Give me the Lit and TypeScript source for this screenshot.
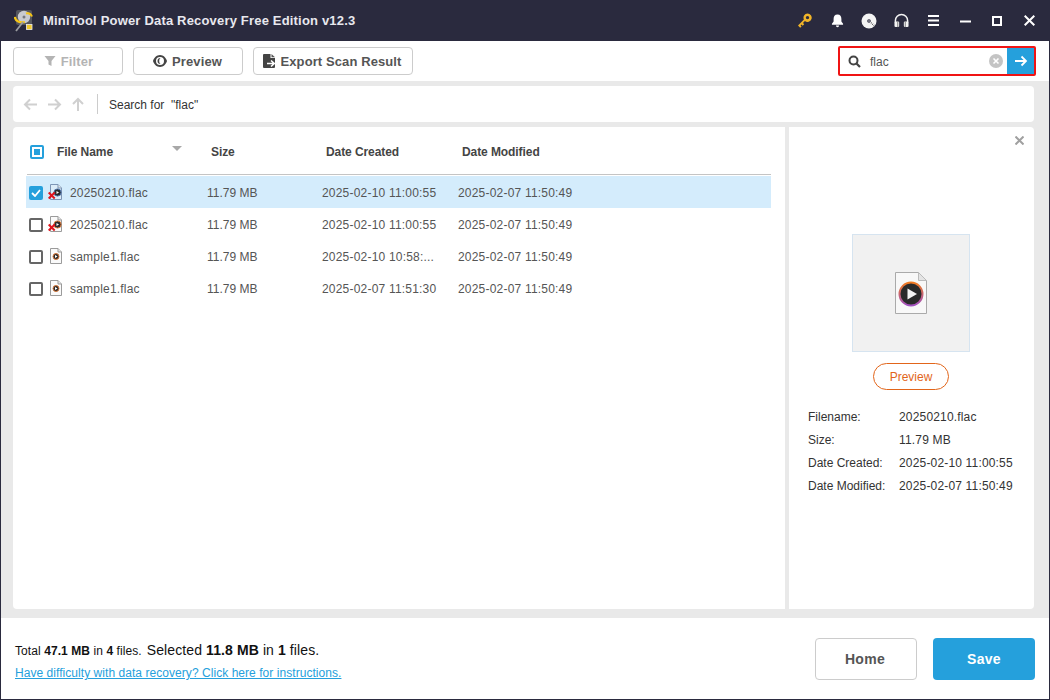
import {LitElement, css, html, svg} from 'lit';
import {customElement} from 'lit/decorators.js';

const ROWS = [
  {name: '20250210.flac', size: '11.79 MB', created: '2025-02-10 11:00:55', modified: '2025-02-07 11:50:49', deleted: true, selected: true},
  {name: '20250210.flac', size: '11.79 MB', created: '2025-02-10 11:00:55', modified: '2025-02-07 11:50:49', deleted: true, selected: false},
  {name: 'sample1.flac', size: '11.79 MB', created: '2025-02-10 10:58:...', modified: '2025-02-07 11:50:49', deleted: false, selected: false},
  {name: 'sample1.flac', size: '11.79 MB', created: '2025-02-07 11:51:30', modified: '2025-02-07 11:50:49', deleted: false, selected: false},
];

const DETAILS = [
  ['Filename:', '20250210.flac'],
  ['Size:', '11.79 MB'],
  ['Date Created:', '2025-02-10 11:00:55'],
  ['Date Modified:', '2025-02-07 11:50:49'],
];

const logo = svg`<svg class="logo" width="20" height="23" viewBox="0 0 20 23">
  <rect x="2" y="1" width="16" height="15" rx="2" fill="#55575e"/>
  <circle cx="10" cy="8" r="6.200" fill="#c9cbcf"/>
  <circle cx="10" cy="8" r="1.500" fill="#77797e"/>
  <path d="M.8 8c.7 4.500 5 6 10 5" stroke="#f5c518" stroke-width="2.200" fill="none"/>
  <path d="M12 4.500c3-1 5 .5 6 3" stroke="#f5c518" stroke-width="2" fill="none"/>
  <path d="M9 13l-7 9" stroke="#9a9ca0" stroke-width="1.800"/>
  <rect x="12.500" y="15.500" width="5.500" height="5" fill="#f0c92c" stroke="#eee" stroke-width=".8"/>
</svg>`;

function fileIcon(deleted: boolean, selected: boolean) {
  const line = selected ? '#7d95b5' : '#9b9b9b';
  const cx = deleted ? 9.5 : 8;
  const r = deleted ? 3.6 : 3;
  return svg`<svg class="file-icon" width="15" height="16" viewBox="0 0 15 16">
    <path d="M2.500.5h7.500l3.500 3.500v11.500h-11z" fill="${selected ? '#dcecf8' : '#fafafa'}" stroke="${line}"/>
    <path d="M10 .5v3.500h3.500" fill="#e6e6e6" stroke="${line}"/>
    <circle cx="${cx}" cy="8.500" r="${r}" fill="#2a2a2a" stroke="${selected ? '#4f74a8' : '#d9783a'}" stroke-width="1"/>
    <path d="M${cx - 1} 7l2.500 1.500L${cx - 1} 10z" fill="#fff"/>
    ${deleted
      ? svg`<path d="M.7 8.500l6 6M6.700 8.500l-6 6" stroke="#e0141c" stroke-width="2"/>`
      : ''}
  </svg>`;
}

@customElement('app-root')
export class AppRoot extends LitElement {
  static styles = css`
    :host {
      display: block;
      width: 1050px;
      height: 700px;
      font-family: 'Liberation Sans', Arial, sans-serif;
      font-size: 12px;
      color: #555;
    }
    .window {
      box-sizing: border-box;
      height: 700px;
      display: flex;
      flex-direction: column;
      border: 1px solid #2a2a3e;
      border-width: 0 1px 1px 1px;
      background: #e9e9e9;
    }
    .titlebar {
      height: 41px;
      flex: none;
      background: #2a2a3e;
      display: flex;
      align-items: center;
      padding-left: 14px;
      margin: 0 -1px;
      color: #e8e8ee;
    }
    .titlebar .logo {
      display: block;
      margin-top: -1px;
    }
    .titlebar .title {
      margin-left: 9px;
      font-size: 13px;
      font-weight: 700;
      letter-spacing: 0.18px;
    }
    .win-icons {
      margin-left: auto;
      display: grid;
      grid-template-columns: repeat(8, 32px);
      justify-items: center;
      align-items: center;
      padding-right: 5px;
    }
    .win-icons svg {
      display: block;
    }
    .toolbar {
      height: 40px;
      flex: none;
      background: #fff;
      display: flex;
      align-items: center;
      padding: 0 13px 0 12px;
    }
    .tool-btn {
      box-sizing: border-box;
      height: 28px;
      width: 110px;
      margin-right: 10px;
      border: 1px solid #ccc;
      border-radius: 4px;
      display: flex;
      align-items: center;
      justify-content: center;
      gap: 5px;
      font-size: 13px;
      font-weight: 700;
      color: #555;
      letter-spacing: 0.1px;
    }
    .tool-btn.disabled {
      color: #b4b4b4;
      padding-left: 1px;
    }
    .tool-btn.wide {
      width: 160px;
      padding-right: 2px;
    }
    .tool-btn.eye {
      padding-right: 1px;
    }
    .search {
      box-sizing: border-box;
      margin-left: auto;
      width: 198px;
      height: 30px;
      border: 2px solid #f01414;
      border-radius: 2px;
      display: flex;
      align-items: center;
      padding-left: 8px;
      color: #555;
    }
    .search .query {
      margin-left: 9px;
      padding-top: 1px;
      flex: 1;
    }
    .search .go {
      width: 27px;
      height: 26px;
      background: #25a0dc;
      display: flex;
      align-items: center;
      justify-content: center;
      margin-left: 4px;
    }
    .content {
      flex: 1;
      min-height: 0;
      padding: 5px 15px 9px 12px;
      display: flex;
      flex-direction: column;
      gap: 5px;
    }
    .address {
      height: 36px;
      flex: none;
      background: #fff;
      border-radius: 4px;
      display: flex;
      align-items: center;
      padding-left: 10px;
      color: #333;
    }
    .address .arrows {
      display: flex;
      gap: 9px;
      align-items: center;
    }
    .address .sep {
      width: 1px;
      height: 20px;
      background: #ccc;
      margin: 0 10px 0 12px;
    }
    .address .path {
      padding: 1px 0 0 1px;
    }
    .main {
      flex: 1;
      min-height: 0;
      display: flex;
      gap: 4px;
    }
    .list {
      width: 772px;
      flex: none;
      background: #fff;
      border-radius: 4px 0 0 4px;
      padding: 0 14px 0 13px;
      box-sizing: border-box;
    }
    .head {
      box-sizing: border-box;
      height: 48px;
      padding-top: 2px;
      border-bottom: 1px solid #c4c4c4;
      margin-left: 1px;
      display: grid;
      grid-template-columns: 30px 154px 115px 136px 1fr;
      align-items: center;
      font-weight: 700;
      color: #444;
      letter-spacing: -0.08px;
      position: relative;
    }
    .head .tri {
      position: absolute;
      left: 145px;
      top: 19px;
      width: 0;
      height: 0;
      border: 5.5px solid transparent;
      border-top: 5px solid #a8a8a8;
      border-bottom: 0;
    }
    .all {
      box-sizing: border-box;
      width: 14px;
      height: 14px;
      margin-left: 3px;
      border: 2px solid #25a0dc;
      border-radius: 2px;
      padding: 2px;
    }
    .all i {
      display: block;
      width: 6px;
      height: 6px;
      background: #25a0dc;
    }
    .rows {
      padding-top: 1px;
    }
    .row {
      box-sizing: border-box;
      height: 32px;
      display: grid;
      grid-template-columns: 19px 22px 137px 115px 136px 1fr;
      align-items: center;
      padding: 2px 0 0 3px;
      letter-spacing: 0.2px;
      color: #555;
    }
    .row .size {
      letter-spacing: 0;
    }
    .row.selected {
      background: #d4ecfc;
    }
    .check {
      box-sizing: border-box;
      width: 14px;
      height: 14px;
      border: 2px solid #666;
      border-radius: 2px;
    }
    .check.on {
      border: none;
      background: #25a0dc;
      display: flex;
      align-items: center;
      justify-content: center;
    }
    .file-icon {
      display: block;
      margin-top: -2px;
    }
    .preview {
      flex: 1;
      background: #fff;
      border-radius: 0 4px 4px 0;
      position: relative;
      display: flex;
      flex-direction: column;
      align-items: center;
      padding: 107px 1px 0 0;
    }
    .preview .close {
      position: absolute;
      right: 10px;
      top: 9px;
    }
    .thumb {
      box-sizing: border-box;
      width: 118px;
      height: 118px;
      background: #f1f1f1;
      border: 1px solid #d6e4f0;
      display: flex;
      align-items: center;
      justify-content: center;
    }
    .pill {
      box-sizing: border-box;
      margin-top: 11px;
      width: 76px;
      height: 27px;
      border: 1px solid #e2651a;
      border-radius: 14px;
      display: flex;
      align-items: center;
      justify-content: center;
      color: #e2651a;
    }
    .details {
      align-self: stretch;
      margin-top: 15px;
      padding-left: 19px;
      display: grid;
      grid-template-columns: 91px 1fr;
      grid-auto-rows: 23px;
      align-items: center;
      color: #333;
    }
    .details .value {
      letter-spacing: 0.17px;
    }
    .footer {
      height: 81px;
      flex: none;
      background: #fff;
      display: flex;
      align-items: center;
      padding: 0 14px;
    }
    .info {
      color: #111;
      padding-top: 5px;
    }
    .info .counts {
      display: flex;
      align-items: baseline;
      gap: 5px;
      letter-spacing: 0.08px;
    }
    .info .selected {
      font-size: 14px;
      letter-spacing: 0.1px;
    }
    .info a {
      display: block;
      margin-top: 8px;
      color: #25a0dc;
      text-decoration: underline;
      letter-spacing: 0.05px;
    }
    .actions {
      margin-left: auto;
      display: flex;
      gap: 16px;
    }
    .actions div {
      box-sizing: border-box;
      width: 102px;
      height: 42px;
      border-radius: 4px;
      display: flex;
      align-items: center;
      justify-content: center;
      font-size: 14px;
      font-weight: 700;
      letter-spacing: 0.3px;
    }
    .home {
      border: 1px solid #ccc;
      color: #555;
      padding-right: 2px;
    }
    .save {
      background: #25a0dc;
      color: #fff;
    }
  `;

  renderWinIcons() {
    return html`<div class="win-icons">
      <svg width="14" height="15" viewBox="0 0 14 15">
        <path fill-rule="evenodd" d="M9.500.5a4.200 4.200 0 1 1-2.600 7.500L5 10l1.200 1.200-1.500 1.500-1.200-1.200-.9.900 1 1-1.400 1.400L0 12.600 5.900 6.500A4.200 4.200 0 0 1 9.500.5zm0 2.400a1.700 1.700 0 1 0 0 3.400 1.700 1.700 0 0 0 0-3.400z" fill="#f0b429"/>
      </svg>
      <svg width="13" height="15" viewBox="0 0 14 15">
        <path d="M7 1c3 0 4.200 2.200 4.200 5v2.500L13 11v1H1v-1l1.800-2.500V6C2.800 3.200 4 1 7 1z" fill="#fff"/>
        <path d="M5.300 13h3.400a1.700 1.700 0 0 1-3.400 0z" fill="#fff"/>
      </svg>
      <svg width="16" height="16" viewBox="0 0 16 16">
        <circle cx="8" cy="8" r="7.500" fill="#f4f4f4"/>
        <circle cx="8" cy="8" r="1.800" fill="#2a2a3e"/>
        <circle cx="8" cy="8" r=".7" fill="#f4f4f4"/>
        <path d="M9.800 10.500l1.200-1M11 11.800l1.200-1M12.200 13.100l1.200-1" stroke="#555" stroke-width="1"/>
      </svg>
      <svg width="15" height="15" viewBox="0 0 16 16">
        <path d="M1.500 10V8a6.500 6.500 0 0 1 13 0v2" fill="none" stroke="#f4f4f4" stroke-width="1.600"/>
        <rect x="0.500" y="9" width="5" height="6" rx="1.200" fill="#f4f4f4"/>
        <rect x="10.500" y="9" width="5" height="6" rx="1.200" fill="#f4f4f4"/>
        <path d="M4 9v6M12 9v6" stroke="#777" stroke-width="1"/>
      </svg>
      <svg width="11" height="11" viewBox="0 0 11 11">
        <path d="M0 1h11M0 5.500h11M0 10h11" stroke="#fff" stroke-width="2"/>
      </svg>
      <svg width="11" height="11" viewBox="0 0 11 11">
        <path d="M0 6.500h11" stroke="#fff" stroke-width="2"/>
      </svg>
      <svg width="10" height="10" viewBox="0 0 10 10">
        <rect x="1" y="1" width="8" height="8" fill="none" stroke="#fff" stroke-width="2"/>
      </svg>
      <svg width="11" height="11" viewBox="0 0 11 11">
        <path d="M.7.700l9.600 9.600M10.300.700L.7 10.300" stroke="#fff" stroke-width="2"/>
      </svg>
    </div>`;
  }

  renderToolbar() {
    return html`<div class="toolbar">
      <div class="tool-btn disabled">
        <svg width="12" height="12" viewBox="0 0 12 12"><path d="M.5 1h11L7.500 6v5l-3-1.500V6z" fill="#b4b4b4"/></svg>
        Filter
      </div>
      <div class="tool-btn eye">
        <svg width="14" height="12" viewBox="0 0 14 12">
          <path fill-rule="evenodd" d="M7 0c3.500 0 6 2.800 7 6-1 3.200-3.500 6-7 6S1 9.200 0 6c1-3.200 3.500-6 7-6zm0 2a4 4 0 1 0 0 8 4 4 0 0 0 0-8z" fill="#444"/>
          <path d="M7.500 3a3 3 0 0 0 0 6 4 4 0 0 1 0-6z" fill="#444"/>
        </svg>
        Preview
      </div>
      <div class="tool-btn wide">
        <svg width="13" height="14" viewBox="0 0 13 14">
          <path d="M1 0h6.500v4H12v9a1 1 0 0 1-1 1H1a1 1 0 0 1-1-1V1a1 1 0 0 1 1-1z" fill="#444"/>
          <path d="M8.500 0L12 3.300H8.500z" fill="#555"/>
          <path d="M4 9.500h7M8 6.500l3.300 3L8 12.500" stroke="#fff" stroke-width="1.600" fill="none"/>
        </svg>
        Export Scan Result
      </div>
      <div class="search">
        <svg width="13" height="13" viewBox="0 0 13 13">
          <circle cx="5.500" cy="5.500" r="4" fill="none" stroke="#444" stroke-width="2"/>
          <path d="M8.500 8.500l3.500 3.500" stroke="#444" stroke-width="2.200"/>
        </svg>
        <span class="query">flac</span>
        <svg width="14" height="14" viewBox="0 0 14 14">
          <circle cx="7" cy="7" r="7" fill="#c4c4c4"/>
          <path d="M4.500 4.500l5 5M9.500 4.500l-5 5" stroke="#fff" stroke-width="1.600"/>
        </svg>
        <div class="go">
          <svg width="14" height="12" viewBox="0 0 14 12">
            <path d="M1 6h11M7.500 1.500L12 6l-4.500 4.500" fill="none" stroke="#fff" stroke-width="1.800"/>
          </svg>
        </div>
      </div>
    </div>`;
  }

  renderAddress() {
    return html`<div class="address">
      <div class="arrows">
        <svg width="15" height="13" viewBox="0 0 15 13"><path d="M14 6.500H2M7 1.500l-5 5 5 5" fill="none" stroke="#d0d0d0" stroke-width="2"/></svg>
        <svg width="15" height="13" viewBox="0 0 15 13"><path d="M1 6.500h12M8 1.500l5 5-5 5" fill="none" stroke="#d0d0d0" stroke-width="2"/></svg>
        <svg width="14" height="14" viewBox="0 0 14 14"><path d="M7 14V2M2 7l5-5 5 5" fill="none" stroke="#d0d0d0" stroke-width="2"/></svg>
      </div>
      <div class="sep"></div>
      <span class="path">Search for &nbsp;"flac"</span>
    </div>`;
  }

  renderList() {
    return html`<div class="list">
      <div class="head">
        <div class="all"><i></i></div>
        <div>File Name</div>
        <div>Size</div>
        <div>Date Created</div>
        <div>Date Modified</div>
        <span class="tri"></span>
      </div>
      <div class="rows">
        ${ROWS.map(
          (r) => html`<div class="row ${r.selected ? 'selected' : ''}">
            ${r.selected
              ? html`<div class="check on">
                  <svg width="10" height="8" viewBox="0 0 10 8"><path d="M1 4l3 3 5-6" fill="none" stroke="#fff" stroke-width="1.800"/></svg>
                </div>`
              : html`<div class="check"></div>`}
            ${fileIcon(r.deleted, r.selected)}
            <div>${r.name}</div>
            <div class="size">${r.size}</div>
            <div>${r.created}</div>
            <div>${r.modified}</div>
          </div>`,
        )}
      </div>
    </div>`;
  }

  renderPreview() {
    return html`<div class="preview">
      <svg class="close" width="9" height="9" viewBox="0 0 9 9"><path d="M.5.5l8 8M8.500.5l-8 8" stroke="#a0a0a0" stroke-width="2"/></svg>
      <div class="thumb">
        <svg width="32" height="42" viewBox="0 0 32 42">
          <defs>
            <linearGradient id="ring" x1="0" y1="0" x2="0" y2="1">
              <stop offset="0" stop-color="#f07a20"/>
              <stop offset="1" stop-color="#a050c0"/>
            </linearGradient>
          </defs>
          <path d="M.5.500h23l8 8v33H.5z" fill="#f8f8f8" stroke="#aaa"/>
          <path d="M23.500.500v8h8z" fill="#e4e4e4" stroke="#bbb"/>
          <circle cx="16" cy="22" r="11.500" fill="#2a2a2a" stroke="url(#ring)" stroke-width="2"/>
          <path d="M12.500 16.500l9.500 5.500-9.500 5.500z" fill="#f4f4f4"/>
        </svg>
      </div>
      <div class="pill">Preview</div>
      <div class="details">
        ${DETAILS.map(([k, v]) => html`<div>${k}</div><div class="value">${v}</div>`)}
      </div>
    </div>`;
  }

  render() {
    return html`<div class="window">
      <div class="titlebar">
        ${logo}
        <span class="title">MiniTool Power Data Recovery Free Edition v12.3</span>
        ${this.renderWinIcons()}
      </div>
      ${this.renderToolbar()}
      <div class="content">
        ${this.renderAddress()}
        <div class="main">
          ${this.renderList()}
          ${this.renderPreview()}
        </div>
      </div>
      <div class="footer">
        <div class="info">
          <div class="counts">
            <span>Total <b>47.1 MB</b> in <b>4</b> files.</span>
            <span class="selected">Selected <b>11.8 MB</b> in <b>1</b> files.</span>
          </div>
          <a>Have difficulty with data recovery? Click here for instructions.</a>
        </div>
        <div class="actions">
          <div class="home">Home</div>
          <div class="save">Save</div>
        </div>
      </div>
    </div>`;
  }
}
